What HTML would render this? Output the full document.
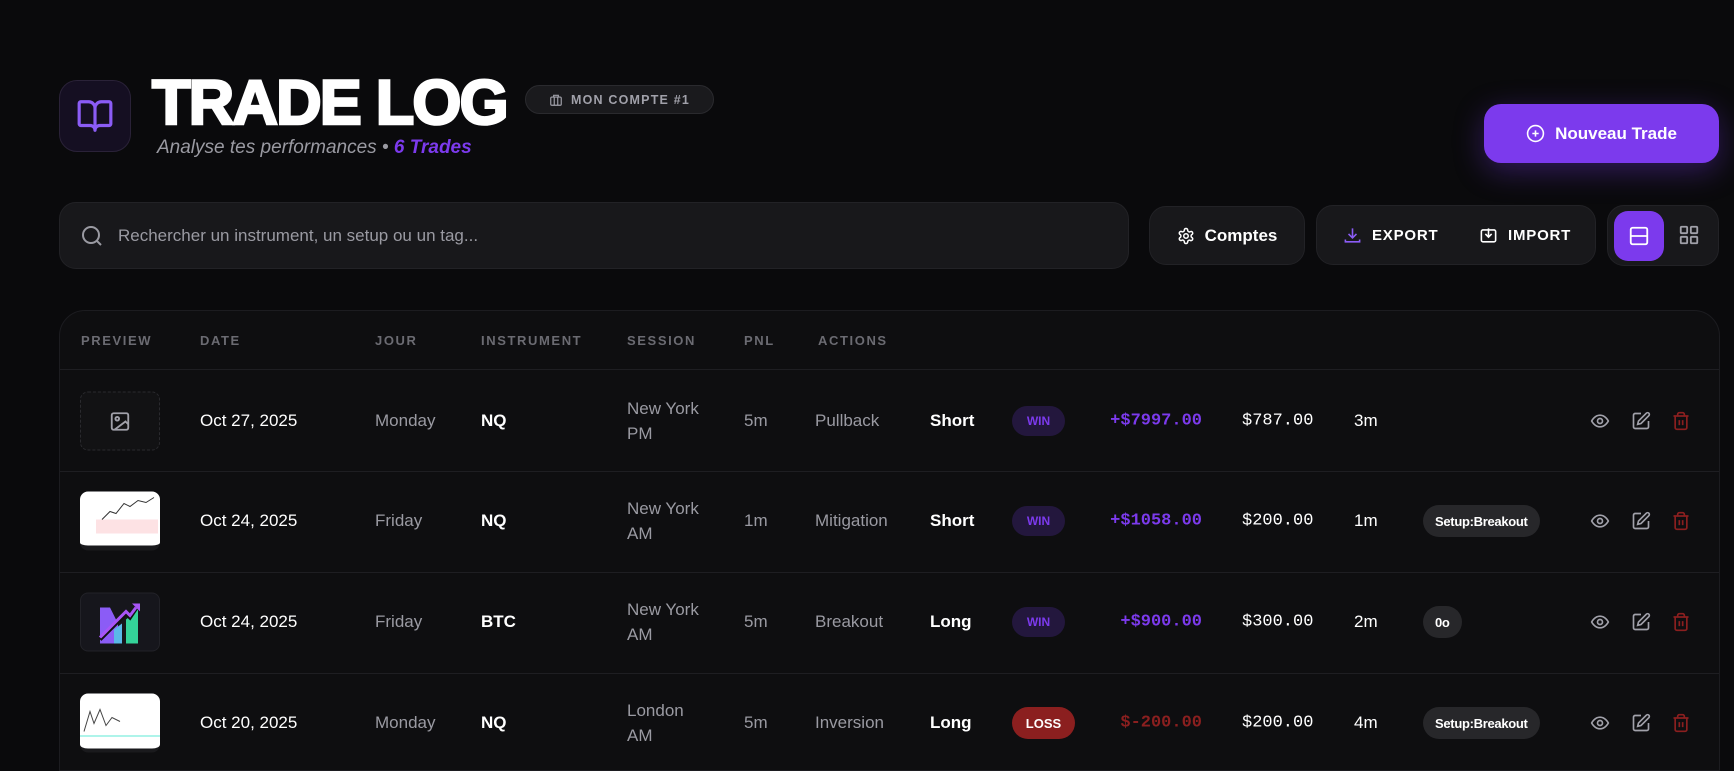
<!DOCTYPE html>
<html style="overflow:hidden;height:771px"><head><meta charset="utf-8"><style>
*{box-sizing:border-box;margin:0;padding:0}
body{width:1734px;height:771px;overflow:hidden;background:#0a0a0c;font-family:"Liberation Sans",sans-serif;color:#fff;position:relative}
.a{position:absolute}
.logo{left:59px;top:80px;width:72px;height:72px;border-radius:18px;background:#150f22;border:1px solid #2a2238;display:flex;align-items:center;justify-content:center}
.title{left:152px;top:66px;font-size:63px;font-weight:bold;letter-spacing:-1.8px;line-height:74px;-webkit-text-stroke:2.6px #fff}
.badge{left:525px;top:85px;width:189px;height:29px;border-radius:15px;background:#1a1a1d;border:1px solid #2a2a2e;color:#a1a1aa;font-size:12.5px;font-weight:bold;letter-spacing:1.2px;display:flex;align-items:center;justify-content:center;gap:8px}
.sub{left:157px;top:137px;font-size:19px;font-style:italic;color:#9a9aa2}
.sub b{color:#7c3aed}
.btn{left:1484px;top:104px;width:235px;height:59px;border-radius:17px;background:#7c3aed;box-shadow:0 8px 30px rgba(124,58,237,.35);display:flex;align-items:center;justify-content:center;gap:10px;font-size:17px;font-weight:bold}
.search{left:59px;top:202px;width:1070px;height:67px;border-radius:17px;background:#18181b;border:1px solid #222226;display:flex;align-items:center;padding-left:20px;gap:14px;color:#9a9aa2;font-size:17px}
.box{background:#18181b;border:1px solid #222226;border-radius:17px;display:flex;align-items:center}
.tbl{left:59px;top:310px;width:1661px;height:461px;border-radius:26px 26px 0 0;border-bottom:none;background:#0e0e10;border:1px solid #1c1c20}
.th{top:333px;font-size:13px;font-weight:bold;letter-spacing:1.6px;color:#6b6b72}
.line{left:60px;width:1659px;height:1px;background:#1e1e22}
.r{font-size:17px;transform:translateY(-50%)}
.g{color:#9a9aa2}
.m{font-family:"Liberation Mono",monospace;font-size:17px;font-weight:bold}
.win{width:53px;height:30px;border-radius:15px;background:#23173d;color:#7c3aed;font-size:12px;font-weight:bold;display:flex;align-items:center;justify-content:center;transform:translateY(-50%)}
.loss{width:63px;height:32px;border-radius:16px;background:#8b1f1f;color:#fff;font-size:13px;font-weight:bold;display:flex;align-items:center;justify-content:center;transform:translateY(-50%)}
.tag{height:32px;border-radius:16px;background:#27272a;color:#fff;font-size:13px;font-weight:bold;display:flex;align-items:center;justify-content:center;padding:0 12px;transform:translateY(-50%);letter-spacing:-.3px}
.ic{transform:translateY(-50%)}
.thumb{width:80px;height:59px;border-radius:8px;transform:translateY(-50%);overflow:hidden}
</style></head><body>
<div class="a logo"><svg width="38" height="38" viewBox="0 0 24 24" fill="none" stroke="#8b5cf6" stroke-width="2" stroke-linejoin="round"><path d="M12 7v14M3 18a1 1 0 0 1-1-1V4a1 1 0 0 1 1-1h5a4 4 0 0 1 4 4 4 4 0 0 1 4-4h5a1 1 0 0 1 1 1v13a1 1 0 0 1-1 1h-6a3 3 0 0 0-3 3 3 3 0 0 0-3-3z"/></svg></div>
<div class="a title">TRADE LOG</div>
<div class="a badge"><svg width="14" height="14" viewBox="0 0 24 24" fill="none" stroke="#a1a1aa" stroke-width="2"><rect x="3" y="7" width="18" height="14" rx="2"/><path d="M8 7V4h8v3M9 7v14M15 7v14"/></svg>MON COMPTE #1</div>
<div class="a sub">Analyse tes performances • <b>6 Trades</b></div>
<div class="a btn"><svg width="19" height="19" viewBox="0 0 24 24" fill="none" stroke="#fff" stroke-width="2"><circle cx="12" cy="12" r="10"/><path d="M12 8v8M8 12h8"/></svg>Nouveau Trade</div>
<div class="a search"><svg width="24" height="24" viewBox="0 0 24 24" fill="none" stroke="#9a9aa2" stroke-width="2"><circle cx="11" cy="11" r="8"/><path d="M21 21l-4.3-4.3"/></svg>Rechercher un instrument, un setup ou un tag...</div>
<div class="a box" style="left:1149px;top:206px;width:156px;height:59px;justify-content:center;gap:10px;font-size:17px;font-weight:bold"><svg width="18" height="18" viewBox="0 0 24 24" fill="none" stroke="#fff" stroke-width="2"><circle cx="12" cy="12" r="3"/><path d="M12.2 2h-.4a2 2 0 0 0-2 2v.2a2 2 0 0 1-1 1.7l-.4.3a2 2 0 0 1-2 0l-.2-.1a2 2 0 0 0-2.7.7l-.2.4a2 2 0 0 0 .7 2.7l.2.1a2 2 0 0 1 1 1.7v.5a2 2 0 0 1-1 1.7l-.2.1a2 2 0 0 0-.7 2.7l.2.4a2 2 0 0 0 2.7.7l.2-.1a2 2 0 0 1 2 0l.4.3a2 2 0 0 1 1 1.7V20a2 2 0 0 0 2 2h.4a2 2 0 0 0 2-2v-.2a2 2 0 0 1 1-1.7l.4-.3a2 2 0 0 1 2 0l.2.1a2 2 0 0 0 2.7-.7l.2-.4a2 2 0 0 0-.7-2.7l-.2-.1a2 2 0 0 1-1-1.7v-.5a2 2 0 0 1 1-1.7l.2-.1a2 2 0 0 0 .7-2.7l-.2-.4a2 2 0 0 0-2.7-.7l-.2.1a2 2 0 0 1-2 0l-.4-.3a2 2 0 0 1-1-1.7V4a2 2 0 0 0-2-2z"/></svg>Comptes</div>
<div class="a box" style="left:1316px;top:205px;width:280px;height:60px;font-size:15px;font-weight:bold;letter-spacing:.8px">
<div class="a" style="left:26px;top:20px;display:flex;gap:10px;align-items:center"><svg width="19" height="19" viewBox="0 0 24 24" fill="none" stroke="#8b5cf6" stroke-width="2"><path d="M12 3v12M7 10l5 5 5-5M3 17v3h18v-3"/></svg>EXPORT</div>
<div class="a" style="left:162px;top:20px;display:flex;gap:10px;align-items:center"><svg width="19" height="19" viewBox="0 0 24 24" fill="none" stroke="#fff" stroke-width="2"><rect x="3" y="5" width="18" height="15" rx="2"/><path d="M12 3v11M8 10l4 4 4-4"/></svg>IMPORT</div></div>
<div class="a box" style="left:1607px;top:205px;width:112px;height:61px">
<div class="a" style="left:6px;top:5px;width:50px;height:50px;border-radius:14px;background:#7c3aed;display:flex;align-items:center;justify-content:center"><svg width="22" height="22" viewBox="0 0 24 24" fill="none" stroke="#fff" stroke-width="2"><rect x="3" y="3" width="18" height="18" rx="2"/><path d="M3 12h18"/></svg></div>
<div class="a" style="left:70px;top:18px"><svg width="22" height="22" viewBox="0 0 24 24" fill="none" stroke="#a1a1aa" stroke-width="2"><rect x="3" y="3" width="7" height="7" rx="1"/><rect x="14" y="3" width="7" height="7" rx="1"/><rect x="3" y="14" width="7" height="7" rx="1"/><rect x="14" y="14" width="7" height="7" rx="1"/></svg></div></div>

<div class="a tbl"></div>
<div class="a th" style="left:81px">PREVIEW</div><div class="a th" style="left:200px">DATE</div><div class="a th" style="left:375px">JOUR</div><div class="a th" style="left:481px">INSTRUMENT</div><div class="a th" style="left:627px">SESSION</div><div class="a th" style="left:744px">PNL</div><div class="a th" style="left:818px">ACTIONS</div>
<div class="a line" style="top:369px"></div><div class="a line" style="top:471px"></div><div class="a line" style="top:572px"></div><div class="a line" style="top:673px"></div>

<div class="a thumb" style="left:80px;top:421px;border:1px dashed #2a2a2e;background:#121214;display:flex;align-items:center;justify-content:center;transform:translateY(-50%)"><svg width="22" height="22" viewBox="0 0 24 24" fill="none" stroke="#a1a1aa" stroke-width="2"><rect x="3" y="3" width="18" height="18" rx="2"/><circle cx="9" cy="9" r="2"/><path d="M21 15l-3-3L6 21"/></svg></div>
<div class="a thumb" style="left:80px;top:521px;background:#fff;border-bottom:5px solid #1a1a1d"><div class="a" style="left:16px;top:28px;width:62px;height:14px;background:#fde2e4"></div><svg class="a" style="left:20px;top:4px" width="56" height="26"><path d="M2 24l8-8 6 2 8-10 6 3 8-6 8 2 8-5" stroke="#333" fill="none"/></svg></div>
<div class="a thumb" style="left:80px;top:622px;background:#16161c;border:1px solid #222228;display:flex;align-items:center;justify-content:center"><svg width="44" height="46" viewBox="0 0 44 46"><path d="M2 8h10l8 16v20H2z" fill="#8b5cf6"/><path d="M16 30l8-6v20h-8z" fill="#5ab8e8"/><path d="M28 20l12-10v34H28z" fill="#34d399"/><path d="M2 40L28 14l4 4 8-12" stroke="#111" stroke-width="4" fill="none"/><path d="M2 38L28 12l4 4 6-8" stroke="#a855f7" stroke-width="3" fill="none"/><path d="M34 4h8v8z" fill="#a855f7"/></svg></div>
<div class="a thumb" style="left:80px;top:723px;background:#fff;border-bottom:4px solid #1a1a1d"><div class="a" style="left:0;top:42px;width:80px;height:1px;background:#5eead4"></div><svg class="a" style="left:2px;top:4px" width="50" height="36"><path d="M2 34l6-20 4 12 6-14 6 16 6-8 8 4" stroke="#444" fill="none"/></svg></div>

<div id="rows"></div>
<script>
var rows=[[421,"Oct 27, 2025","Monday","NQ","New York","PM","5m","Pullback","Short","WIN","+$7997.00","$787.00","3m",""],
[521,"Oct 24, 2025","Friday","NQ","New York","AM","1m","Mitigation","Short","WIN","+$1058.00","$200.00","1m","Setup:Breakout"],
[622,"Oct 24, 2025","Friday","BTC","New York","AM","5m","Breakout","Long","WIN","+$900.00","$300.00","2m","0o"],
[723,"Oct 20, 2025","Monday","NQ","London","AM","5m","Inversion","Long","LOSS","$-200.00","$200.00","4m","Setup:Breakout"]];
var h="";
rows.forEach(function(r){var y=r[0];
h+='<div class="a r" style="left:200px;top:'+y+'px">'+r[1]+'</div>';
h+='<div class="a r g" style="left:375px;top:'+y+'px">'+r[2]+'</div>';
h+='<div class="a r" style="left:481px;top:'+y+'px;font-weight:bold">'+r[3]+'</div>';
h+='<div class="a r g" style="left:627px;top:'+y+'px;line-height:25px">'+r[4]+'<br>'+r[5]+'</div>';
h+='<div class="a r g" style="left:744px;top:'+y+'px">'+r[6]+'</div>';
h+='<div class="a r g" style="left:815px;top:'+y+'px">'+r[7]+'</div>';
h+='<div class="a r" style="left:930px;top:'+y+'px;font-weight:bold">'+r[8]+'</div>';
h+=r[9]=="WIN"?'<div class="a win" style="left:1012px;top:'+y+'px">WIN</div>':'<div class="a loss" style="left:1012px;top:'+y+'px">LOSS</div>';
h+='<div class="a r m" style="right:532px;top:'+y+'px;color:'+(r[9]=="WIN"?"#7c3aed":"#8b1f1f")+'">'+r[10]+'</div>';
h+='<div class="a r m" style="left:1242px;top:'+y+'px;font-weight:normal">'+r[11]+'</div>';
h+='<div class="a r" style="left:1354px;top:'+y+'px">'+r[12]+'</div>';
if(r[13])h+='<div class="a tag" style="left:1423px;top:'+y+'px">'+r[13]+'</div>';
h+='<svg class="a ic" style="left:1590px;top:'+y+'px" width="20" height="20" viewBox="0 0 24 24" fill="none" stroke="#a1a1aa" stroke-width="2"><path d="M2 12s3.5-7 10-7 10 7 10 7-3.5 7-10 7S2 12 2 12z"/><circle cx="12" cy="12" r="3"/></svg>';
h+='<svg class="a ic" style="left:1631px;top:'+y+'px" width="20" height="20" viewBox="0 0 24 24" fill="none" stroke="#a1a1aa" stroke-width="2"><path d="M12 3H5a2 2 0 0 0-2 2v14a2 2 0 0 0 2 2h14a2 2 0 0 0 2-2v-7"/><path d="M18.4 2.6a2.1 2.1 0 0 1 3 3L12 15l-4 1 1-4z"/></svg>';
h+='<svg class="a ic" style="left:1671px;top:'+y+'px" width="20" height="20" viewBox="0 0 24 24" fill="none" stroke="#8b1f1f" stroke-width="2"><path d="M3 6h18M8 6V4a2 2 0 0 1 2-2h4a2 2 0 0 1 2 2v2M19 6v14a2 2 0 0 1-2 2H7a2 2 0 0 1-2-2V6M10 11v6M14 11v6"/></svg>';
});
document.getElementById("rows").innerHTML=h;
</script>
</body></html>
